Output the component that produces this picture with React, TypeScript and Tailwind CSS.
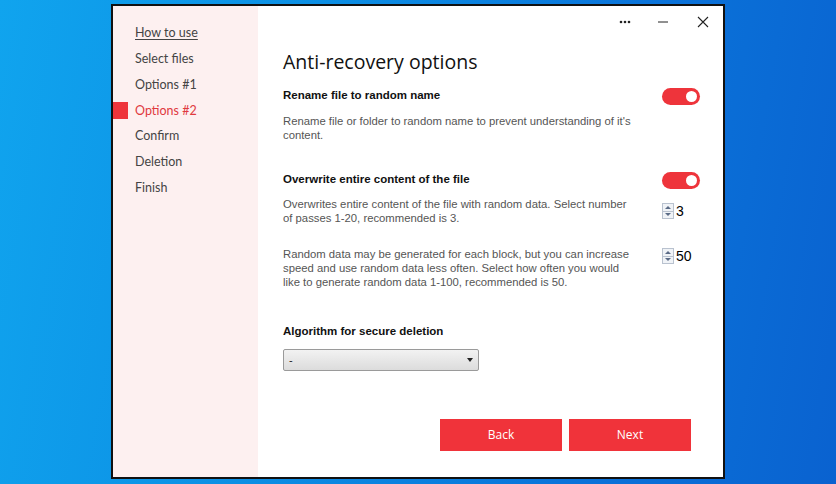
import { useState } from "react";

const steps = ["How to use", "Select files", "Options #1", "Options #2", "Confirm", "Deletion", "Finish"];

function Toggle({ on }: { on: boolean }) {
  return (
    <div className={`w-[38px] h-[17px] rounded-full flex items-center px-[3px] ${on ? "bg-[#ee343b] justify-end" : "bg-gray-300 justify-start"}`}>
      <div className="w-[11px] h-[11px] rounded-full bg-white" />
    </div>
  );
}

function Spinner({ value }: { value: number }) {
  return (
    <div className="flex items-center gap-[2px]">
      <div className="flex flex-col w-[12px] h-[16px] border border-[#b9c2cf] bg-[#f0f3f7]">
        <div className="flex-1 flex items-center justify-center border-b border-[#b9c2cf]">
          <div className="w-0 h-0 border-l-[3px] border-r-[3px] border-b-[3px] border-l-transparent border-r-transparent border-b-[#5a6b86]" />
        </div>
        <div className="flex-1 flex items-center justify-center">
          <div className="w-0 h-0 border-l-[3px] border-r-[3px] border-t-[3px] border-l-transparent border-r-transparent border-t-[#5a6b86]" />
        </div>
      </div>
      <span className="text-[14px] text-black leading-none font-['Liberation_Sans',sans-serif]">{value}</span>
    </div>
  );
}

export default function App() {
  const [active] = useState(3);
  return (
    <div className="w-[836px] h-[484px] overflow-hidden bg-[linear-gradient(100deg,#10a4ee_0%,#0c8fe4_35%,#0a74da_70%,#0a62d0_100%)] pl-[111px] pt-[4px]">
      <div className="w-[614px] h-[475px] border-2 border-[#111] flex bg-white">
        <aside className="w-[145px] bg-[#fdf0f0] pt-[15px] flex flex-col font-['Lato',sans-serif] text-[12.5px]">
          {steps.map((s, i) => (
            <div key={s} className="h-[25.7px] flex items-center">
              <div className={`w-[15px] h-[17px] ${i === active ? "bg-[#ee343b]" : ""}`} />
              <span
                className={`ml-[7px] ${i === active ? "text-[#e0393e]" : "text-[#444]"} ${i === 0 ? "underline underline-offset-2" : ""}`}
              >
                {s}
              </span>
            </div>
          ))}
        </aside>

        <main className="flex-1 flex flex-col pl-[25px] pr-[23px] font-['Liberation_Sans',sans-serif]">
          <div className="h-[32px] flex items-center justify-end gap-[26px] mr-[-9px] text-[#222]">
            <svg width="12" height="4" viewBox="0 0 12 4">
              <circle cx="2" cy="2" r="1.3" fill="#222" />
              <circle cx="6" cy="2" r="1.3" fill="#222" />
              <circle cx="10" cy="2" r="1.3" fill="#222" />
            </svg>
            <svg width="12" height="12" viewBox="0 0 12 12">
              <path d="M1 6h10" stroke="#222" strokeWidth="1" />
            </svg>
            <svg width="12" height="12" viewBox="0 0 12 12" className="ml-[2px]">
              <path d="M1 1l10 10M11 1L1 11" stroke="#222" strokeWidth="1.1" />
            </svg>
          </div>

          <h1 className="mt-[10px] text-[19.5px] leading-[28px] text-[#111] font-['Open_Sans',sans-serif]">Anti-recovery options</h1>

          <div className="mt-[11px] flex items-center justify-between h-[18px]">
            <h3 className="text-[11.5px] font-bold text-[#111]">Rename file to random name</h3>
            <Toggle on />
          </div>
          <p className="mt-[9px] w-[350px] text-[11.3px] leading-[14px] text-[#555]">
            Rename file or folder to random name to prevent understanding of it's content.
          </p>

          <div className="mt-[29px] flex items-center justify-between h-[18px]">
            <h3 className="text-[11.5px] font-bold text-[#111]">Overwrite entire content of the file</h3>
            <Toggle on />
          </div>
          <div className="mt-[8px] flex items-start justify-between">
            <p className="w-[350px] text-[11.3px] leading-[14px] text-[#555]">
              Overwrites entire content of the file with random data. Select number of passes 1-20, recommended is 3.
            </p>
            <div className="mt-[6px] w-[38px]">
              <Spinner value={3} />
            </div>
          </div>

          <div className="mt-[22px] flex items-start justify-between">
            <p className="w-[350px] text-[11.3px] leading-[14px] text-[#555]">
              Random data may be generated for each block, but you can increase speed and use random data less often. Select how often you would like to generate random data 1-100, recommended is 50.
            </p>
            <div className="mt-[1px] w-[38px]">
              <Spinner value={50} />
            </div>
          </div>

          <h3 className="mt-[34px] text-[11.5px] font-bold text-[#111]">Algorithm for secure deletion</h3>
          <div className="mt-[9px] w-[196px] h-[22px] border border-[#9a9a9a] rounded-[2px] bg-[linear-gradient(#f2f2f2,#dcdcdc)] flex items-center justify-between px-[5px] text-[11px] text-[#222]">
            <span>-</span>
            <div className="w-0 h-0 border-l-[3.5px] border-r-[3.5px] border-t-[4px] border-l-transparent border-r-transparent border-t-[#222]" />
          </div>

          <div className="mt-[48px] flex justify-end gap-[7px] pr-[9px]">
            <button className="w-[122px] h-[32px] bg-[#f0333a] text-white text-[12px] font-['Open_Sans',sans-serif]">Back</button>
            <button className="w-[122px] h-[32px] bg-[#f0333a] text-white text-[12px] font-['Open_Sans',sans-serif]">Next</button>
          </div>
        </main>
      </div>
    </div>
  );
}
